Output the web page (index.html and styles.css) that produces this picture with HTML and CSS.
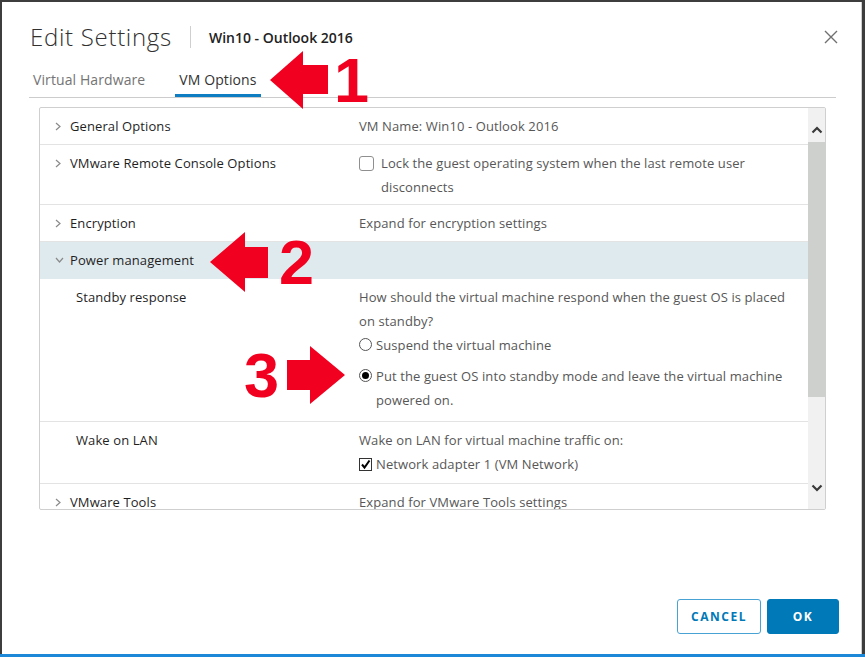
FILE: index.html
```html
<!DOCTYPE html>
<html>
<head>
<meta charset="utf-8">
<link rel="stylesheet" href="styles.css">
</head>
<body>
<div class="screen">
  <div class="dialog">
    <header class="head">
      <h1 class="title">Edit Settings</h1>
      <span class="sep"></span>
      <span class="sub">Win10 - Outlook 2016</span>
      <button class="close" aria-label="Close">
        <svg width="14" height="14" viewBox="0 0 14 14"><path d="M1 1 L13 13 M13 1 L1 13" stroke="#707070" stroke-width="1.4" fill="none"/></svg>
      </button>
    </header>
    <nav class="tabs">
      <span class="tab">Virtual Hardware</span>
      <span class="tab active">VM Options</span>
    </nav>
    <div class="panel">
      <div class="rows">
        <div class="row">
          <span class="chev"><svg width="6" height="9" viewBox="0 0 6 9"><path d="M1 1 L5 4.5 L1 8" stroke="#8a8a8a" stroke-width="1.2" fill="none"/></svg></span>
          <span class="label">General Options</span>
          <span class="value">VM Name: Win10 - Outlook 2016</span>
        </div>
        <div class="row tight">
          <span class="chev"><svg width="6" height="9" viewBox="0 0 6 9"><path d="M1 1 L5 4.5 L1 8" stroke="#8a8a8a" stroke-width="1.2" fill="none"/></svg></span>
          <span class="label">VMware Remote Console Options</span>
          <span class="value check-line"><span class="cbox"></span><span class="txt">Lock the guest operating system when the last remote user disconnects</span></span>
        </div>
        <div class="row">
          <span class="chev"><svg width="6" height="9" viewBox="0 0 6 9"><path d="M1 1 L5 4.5 L1 8" stroke="#8a8a8a" stroke-width="1.2" fill="none"/></svg></span>
          <span class="label">Encryption</span>
          <span class="value">Expand for encryption settings</span>
        </div>
        <div class="row open">
          <span class="chev"><svg width="9" height="6" viewBox="0 0 9 6"><path d="M1 1 L4.5 5 L8 1" stroke="#8a8a8a" stroke-width="1.2" fill="none"/></svg></span>
          <span class="label">Power management</span>
          <span class="value"></span>
        </div>
        <div class="row sub standby">
          <span class="chev"></span>
          <span class="label">Standby response</span>
          <span class="value stack">
            <span class="txt">How should the virtual machine respond when the guest OS is placed on standby?</span>
            <span class="opt"><span class="radio"></span><span class="txt">Suspend the virtual machine</span></span>
            <span class="opt gap"><span class="radio on"></span><span class="txt">Put the guest OS into standby mode and leave the virtual machine powered on.</span></span>
          </span>
        </div>
        <div class="row sub wol">
          <span class="chev"></span>
          <span class="label">Wake on LAN</span>
          <span class="value stack">
            <span class="txt">Wake on LAN for virtual machine traffic on:</span>
            <span class="opt"><span class="cbox small"><svg width="11" height="11" viewBox="0 0 11 11"><path d="M2 5.5 L4.5 8.5 L9.5 1.5" stroke="#000" stroke-width="2" fill="none"/></svg></span><span class="txt">Network adapter 1 (VM Network)</span></span>
          </span>
        </div>
        <div class="row">
          <span class="chev"><svg width="6" height="9" viewBox="0 0 6 9"><path d="M1 1 L5 4.5 L1 8" stroke="#8a8a8a" stroke-width="1.2" fill="none"/></svg></span>
          <span class="label">VMware Tools</span>
          <span class="value">Expand for VMware Tools settings</span>
        </div>
      </div>
      <div class="scrollbar">
        <div class="sb-arrow"><svg width="12" height="8" viewBox="0 0 12 8"><path d="M1.5 6.5 L6 2 L10.5 6.5" stroke="#3a3a3a" stroke-width="2.2" fill="none"/></svg></div>
        <div class="sb-thumb"></div>
        <div class="sb-track"></div>
        <div class="sb-arrow down"><svg width="12" height="8" viewBox="0 0 12 8"><path d="M1.5 1.5 L6 6 L10.5 1.5" stroke="#3a3a3a" stroke-width="2.2" fill="none"/></svg></div>
      </div>
    </div>
    <div class="spacer"></div>
    <footer class="foot">
      <button class="btn outline">CANCEL</button>
      <button class="btn primary">OK</button>
    </footer>
  </div>
  <div class="bluebar"></div>
  <svg class="marks" width="865" height="657" viewBox="0 0 865 657">
    <polygon points="270,80 303,51 303,65 328,65 328,94 303,94 303,109" fill="#f2001f"/>
    <text x="334" y="102" class="num">1</text>
    <polygon points="210,262 245,232 245,247 268,247 268,278 245,278 245,292" fill="#f2001f"/>
    <text x="279" y="284" class="num">2</text>
    <polygon points="287,360 310,360 310,346 345,375 310,404 310,390 287,390" fill="#f2001f"/>
    <text x="244" y="397" class="num">3</text>
  </svg>
</div>
</body>
</html>
```

FILE: styles.css
```css
* { box-sizing: border-box; }
html, body { margin: 0; padding: 0; }
body {
  background: #3d3d3d;
  font-family: "Open Sans", "Lato", sans-serif;
  font-weight: 400;
  color: #333;
}
.screen {
  position: relative;
  width: 865px;
  height: 657px;
  display: flex;
  flex-direction: column;
  overflow: hidden;
}
.dialog {
  margin: 2px 0 0 2px;
  width: 860px;
  height: 652px;
  background: #fff;
  border-right: 1px solid #cfcfcf;
  padding: 20px 25px 20px 27px;
  display: flex;
  flex-direction: column;
}
.bluebar {
  height: 3px;
  background: #1e88d8;
}
.head {
  height: 30px;
  display: flex;
  align-items: center;
  padding-left: 1px;
}
.title {
  margin: 0;
  font-weight: 300;
  font-size: 24px;
  color: #313131;
  line-height: 30px;
  letter-spacing: 0.7px;
}
.sep {
  width: 1px;
  height: 22px;
  background: #cfcfcf;
  margin: 0 18px 0 18px;
}
.sub {
  font-size: 14px;
  font-weight: 600;
  color: #222;
}
.close {
  margin-left: auto;
  margin-right: -2px;
  border: 0;
  background: none;
  padding: 0;
  width: 14px;
  height: 14px;
  display: flex;
}
.tabs {
  margin-top: 10px;
  display: flex;
  gap: 26px;
  border-bottom: 1px solid #cccccc;
}
.tab {
  font-size: 14px;
  line-height: 24px;
  padding: 6px 4px 2px;
  border-bottom: 3px solid transparent;
  color: #747474;
  letter-spacing: 0.1px;
}
.tab.active {
  color: #333;
  border-bottom-color: #0f7dc2;
}
.panel {
  margin: 9px 10px 0 10px;
  height: 403px;
  border: 1px solid #cfcfcf;
  border-radius: 2px;
  display: flex;
  overflow: hidden;
}
.rows {
  width: 768px;
  overflow: hidden;
}
.row {
  display: grid;
  grid-template-columns: 30px 289px 1fr;
  align-items: start;
  font-size: 13px;
  line-height: 24px;
  padding: 6px 0;
  border-bottom: 1px solid #e3e3e3;
}
.row.tight { padding-bottom: 5px; }
.row.open { background: #dfeaee; border-bottom-color: #dfeaee; }
.chev {
  height: 24px;
  display: flex;
  align-items: center;
  justify-content: flex-start;
  padding-left: 15px;
}
.row .label {
  color: #1f1f1f;
  font-weight: 500;
  letter-spacing: 0.1px;
}
.row.sub .label { margin-left: 6px; }
.value {
  color: #575757;
  font-weight: 400;
  padding-right: 12px;
  letter-spacing: 0.1px;
}
.txt { color: #575757; font-weight: 400; }
.stack {
  display: flex;
  flex-direction: column;
}
.check-line {
  display: flex;
  align-items: flex-start;
}
.cbox {
  flex: none;
  width: 15px;
  height: 15px;
  border: 1px solid #8f8f8f;
  border-radius: 3px;
  margin: 5px 7px 0 0;
  background: #fff;
}
.cbox.small {
  width: 13px;
  height: 13px;
  border-radius: 0;
  border-color: #333;
  margin: 6px 4px 0 0;
  display: flex;
  align-items: center;
  justify-content: center;
}
.opt {
  display: flex;
  align-items: flex-start;
}
.opt.gap { margin-top: 7px; }
.radio {
  flex: none;
  width: 13px;
  height: 13px;
  border: 1px solid #555;
  border-radius: 50%;
  margin: 5px 4px 0 0;
  background: #fff;
  display: flex;
  align-items: center;
  justify-content: center;
}
.radio.on::after {
  content: "";
  width: 7px;
  height: 7px;
  border-radius: 50%;
  background: #000;
}
.standby { padding-bottom: 9px; }
.wol { padding-bottom: 7px; }
.scrollbar {
  width: 17px;
  background: #f1f1f1;
  display: flex;
  flex-direction: column;
}
.sb-arrow {
  height: 34px;
  display: flex;
  align-items: flex-end;
  justify-content: center;
  padding-bottom: 8px;
}
.sb-arrow.down {
  height: 28px;
  align-items: flex-start;
  padding: 0;
  padding-top: 8px;
  margin-bottom: 5px;
}
.sb-thumb {
  height: 255px;
  background: #cdd0cc;
}
.sb-track { flex: 1; }
.spacer { flex: 1; }
.foot {
  display: flex;
  justify-content: flex-end;
  gap: 6px;
  margin-right: -3px;
}
.btn {
  height: 35px;
  border-radius: 3px;
  font-family: "Open Sans", sans-serif;
  font-size: 12px;
  font-weight: 700;
  letter-spacing: 1.5px;
  padding: 0;
}
.btn.outline {
  width: 84px;
  background: #fff;
  border: 1px solid #49a2d4;
  color: #0079b8;
}
.btn.primary {
  width: 72px;
  background: #0079b8;
  border: 1px solid #0079b8;
  color: #fff;
}
.marks {
  position: absolute;
  left: 0;
  top: 0;
  pointer-events: none;
}
.num {
  font-family: "Liberation Sans", Arial, sans-serif;
  font-weight: 700;
  font-size: 63px;
  fill: #f2001f;
}
```
